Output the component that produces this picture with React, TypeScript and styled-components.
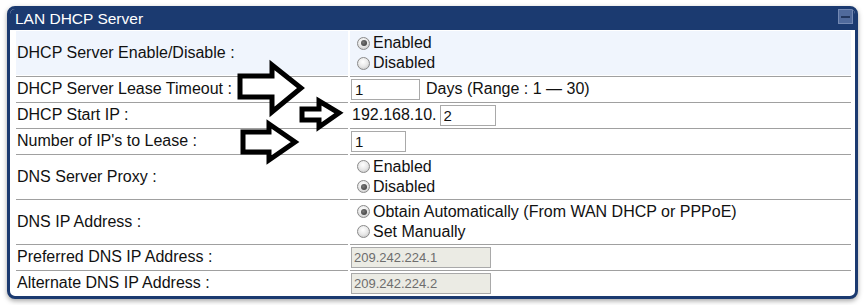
import React from 'react';
import styled, { createGlobalStyle } from 'styled-components';

const GlobalStyle = createGlobalStyle`
  html, body {
    margin: 0;
    padding: 0;
    background: #ffffff;
  }
  body {
    font-family: 'Liberation Sans', Arial, sans-serif;
    color: #111111;
  }
`;

const Page = styled.div`
  position: relative;
  width: 867px;
  height: 305px;
  padding: 6px 9px 0 7px;
  box-sizing: border-box;
`;

const Panel = styled.div`
  border: 3px solid #1b3a70;
  border-radius: 8px;
  background: #ffffff;
  box-shadow: 0 2px 5px rgba(0, 0, 0, 0.35);
  overflow: hidden;
`;

const Header = styled.div`
  height: 21px;
  background: #1b3a70;
  display: flex;
  justify-content: space-between;
  align-items: flex-start;
  padding: 0 2px 0 5px;
`;

const Title = styled.div`
  color: #ffffff;
  font-size: 15.5px;
  line-height: 19px;
`;

const MinButton = styled.div`
  width: 15px;
  height: 15px;
  box-sizing: border-box;
  border: 1px solid #7489b3;
  background: #506a9c;
  display: flex;
  align-items: center;
  justify-content: center;
  &::after {
    content: '';
    width: 9px;
    height: 2px;
    background: #22375f;
  }
`;

const Body = styled.div`
  display: flex;
  flex-direction: column;
  gap: 1px;
  padding: 1px 4px 1px 6px;
`;

const Row = styled.div<{ $tall?: boolean; $first?: boolean; $tint?: boolean }>`
  display: grid;
  grid-template-columns: 332px 1fr;
  column-gap: 2px;
  height: ${({ $tall }) => ($tall ? '44px' : '25px')};
  & > div {
    border-top: ${({ $first }) => ($first ? 'none' : '1px solid #a0a0a0')};
    background: ${({ $tint }) => ($tint ? '#f0f5fd' : 'transparent')};
  }
`;

const Label = styled.div`
  display: flex;
  align-items: center;
  padding-left: 1px;
  font-size: 16px;
`;

const Value = styled.div`
  display: flex;
  align-items: center;
  padding-left: 1px;
  font-size: 16px;
`;

const Options = styled.div`
  display: flex;
  flex-direction: column;
`;

const Option = styled.label`
  display: flex;
  align-items: center;
  height: 20px;
`;

const RadioDot = styled.span<{ $on?: boolean }>`
  width: 13px;
  height: 13px;
  box-sizing: border-box;
  margin: 0 3px 0 6px;
  border-radius: 50%;
  border: 1px solid #8a8a8a;
  background: radial-gradient(circle at 45% 35%, #ffffff 0%, #e8e8e8 50%, #bdbdbd 100%);
  display: flex;
  align-items: center;
  justify-content: center;
  &::after {
    content: '';
    display: ${({ $on }) => ($on ? 'block' : 'none')};
    width: 6px;
    height: 6px;
    border-radius: 50%;
    background: radial-gradient(circle at 40% 40%, #7a7a7a, #333333);
  }
`;

const TextBox = styled.input<{ $w: number }>`
  width: ${({ $w }) => $w}px;
  height: 21px;
  box-sizing: border-box;
  border: 1px solid #a9a9a9;
  padding: 0 3px;
  font-family: 'Liberation Sans', Arial, sans-serif;
  font-size: 15px;
  color: #111111;
  background: #ffffff;
  outline: none;
  &:disabled {
    background: #ebebe4;
    color: #6d6d6d;
    font-size: 13px;
    padding: 0 2px;
  }
`;

const Note = styled.span`
  margin-left: 6px;
`;

const Prefix = styled.span`
  margin: 0 3px 0 1px;
`;

const Arrows = styled.svg`
  position: absolute;
  left: 0;
  top: 0;
  pointer-events: none;
`;

type Opt = { text: string; on?: boolean };

const RadioGroup = ({ items }: { items: Opt[] }) => (
  <Options>
    {items.map((it) => (
      <Option key={it.text}>
        <RadioDot $on={it.on} />
        {it.text}
      </Option>
    ))}
  </Options>
);

const App = () => {
  return (
    <Page>
      <GlobalStyle />
      <Panel>
        <Header>
          <Title>LAN DHCP Server</Title>
          <MinButton />
        </Header>
        <Body>
          <Row $tall $first $tint>
            <Label>DHCP Server Enable/Disable :</Label>
            <Value>
              <RadioGroup items={[{ text: 'Enabled', on: true }, { text: 'Disabled' }]} />
            </Value>
          </Row>
          <Row>
            <Label>DHCP Server Lease Timeout :</Label>
            <Value>
              <TextBox $w={69} defaultValue="1" />
              <Note>Days (Range : 1 — 30)</Note>
            </Value>
          </Row>
          <Row>
            <Label>DHCP Start IP :</Label>
            <Value>
              <Prefix>192.168.10.</Prefix>
              <TextBox $w={56} defaultValue="2" />
            </Value>
          </Row>
          <Row>
            <Label>Number of IP's to Lease :</Label>
            <Value>
              <TextBox $w={55} defaultValue="1" />
            </Value>
          </Row>
          <Row $tall>
            <Label>DNS Server Proxy :</Label>
            <Value>
              <RadioGroup items={[{ text: 'Enabled' }, { text: 'Disabled', on: true }]} />
            </Value>
          </Row>
          <Row $tall>
            <Label>DNS IP Address :</Label>
            <Value>
              <RadioGroup
                items={[
                  { text: 'Obtain Automatically (From WAN DHCP or PPPoE)', on: true },
                  { text: 'Set Manually' },
                ]}
              />
            </Value>
          </Row>
          <Row>
            <Label>Preferred DNS IP Address :</Label>
            <Value>
              <TextBox $w={140} defaultValue="209.242.224.1" disabled />
            </Value>
          </Row>
          <Row>
            <Label>Alternate DNS IP Address :</Label>
            <Value>
              <TextBox $w={140} defaultValue="209.242.224.2" disabled />
            </Value>
          </Row>
        </Body>
      </Panel>
      <Arrows width={867} height={305}>
        <g fill="#ffffff" stroke="#000000" strokeWidth={5} strokeLinejoin="miter">
          <polygon points="240,76 272,76 272,65 301,88 272,112 272,97 240,97" />
          <polygon points="302,109 319,109 319,101 339,113 319,127 319,120 302,120" />
          <polygon points="243,132 269,132 269,124 295,142 269,160 269,152 243,152" />
        </g>
      </Arrows>
    </Page>
  );
};

export default App;
